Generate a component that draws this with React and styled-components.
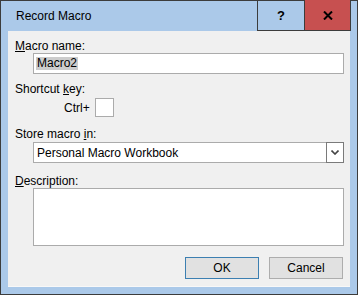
import React from "react";
import styled, { createGlobalStyle } from "styled-components";

const GlobalStyle = createGlobalStyle`
  html, body { margin: 0; padding: 0; background: #ffffff; }
  body { font-family: "Liberation Sans", Arial, sans-serif; font-size: 12px; color: #000; }
  * { box-sizing: border-box; }
`;

const Window = styled.div`
  width: 358px;
  height: 295px;
  border: 1px solid #3c3c3c;
  background: #abc9e9;
  display: flex;
  flex-direction: column;
`;

const TitleBar = styled.div`
  height: 30px;
  display: flex;
  align-items: stretch;
  padding-right: 6px;
`;

const Title = styled.div`
  flex: 1;
  padding-left: 15px;
  line-height: 30px;
  font-size: 12px;
  color: #000;
`;

const CaptionButton = styled.div`
  width: ${(p) => p.$w}px;
  margin-top: -1px;
  height: 31px;
  display: flex;
  align-items: center;
  justify-content: center;
  background: ${(p) => (p.$close ? "#c75050" : "transparent")};
  border-left: 1px solid #3c3c3c;
  border-bottom: 1px solid #3c3c3c;
  border-right: ${(p) => (p.$close ? "1px solid #3c3c3c" : "none")};
  font-weight: bold;
  font-size: 13px;
  color: #000;
`;

const Client = styled.div`
  flex: 1;
  margin: 0 7px 7px 7px;
  background: #f0f0f0;
  border-bottom: 1px solid #f8f8f8;
  padding: 8px 6px 0 7px;
  display: flex;
  flex-direction: column;
`;

const Label = styled.div`
  line-height: 14px;
  height: 14px;
  margin-top: ${(p) => p.$mt || 0}px;
  white-space: nowrap;
`;

const Field = styled.div`
  margin-left: 18px;
  margin-top: ${(p) => p.$mt || 0}px;
  height: ${(p) => p.$h || 21}px;
  background: #fff;
  border: 1px solid #ababab;
  display: flex;
  align-items: center;
  padding-left: 2px;
`;

const Selected = styled.span`
  background: #cccccc;
  line-height: 13px;
  padding: 0 1px;
`;

const ShortcutRow = styled.div`
  display: flex;
  align-items: center;
  margin-left: 49px;
  margin-top: 2px;
  gap: 5px;
`;

const KeyBox = styled.div`
  width: 19px;
  height: 19px;
  background: #fff;
  border: 1px solid #ababab;
`;

const SelectText = styled.span`
  flex: 1;
  padding-left: 1px;
`;

const DropButton = styled.div`
  width: 18px;
  height: 21px;
  margin: -1px -1px -1px 0;
  border: 1px solid #7a7a7a;
  background: #fff;
  display: flex;
  align-items: center;
  justify-content: center;
`;

const ButtonRow = styled.div`
  display: flex;
  justify-content: flex-end;
  gap: 10px;
  margin-top: 11px;
  margin-right: 1px;
`;

const Button = styled.div`
  width: 74px;
  height: 22px;
  background: #e1e1e1;
  border: 1px solid ${(p) => (p.$default ? "#3c7fb1" : "#adadad")};
  display: flex;
  align-items: center;
  justify-content: center;
`;

export default function App() {
  return (
    <>
      <GlobalStyle />
      <Window>
        <TitleBar>
          <Title>Record Macro</Title>
          <CaptionButton $w={47}>?</CaptionButton>
          <CaptionButton $w={47} $close>
            <svg width="10" height="9" viewBox="0 0 10 9">
              <path d="M1 0.5 L9 8.5 M9 0.5 L1 8.5" stroke="#000" strokeWidth="2" />
            </svg>
          </CaptionButton>
        </TitleBar>
        <Client>
          <Label>
            <u>M</u>acro name:
          </Label>
          <Field>
            <Selected>Macro2</Selected>
          </Field>
          <Label $mt={8}>
            Shortcut <u>k</u>ey:
          </Label>
          <ShortcutRow>
            <span>Ctrl+</span>
            <KeyBox />
          </ShortcutRow>
          <Label $mt={10}>
            Store macro <u>i</u>n:
          </Label>
          <Field $mt={1}>
            <SelectText>Personal Macro Workbook</SelectText>
            <DropButton>
              <svg width="8" height="5" viewBox="0 0 8 5">
                <path d="M0.5 0.5 L4 4 L7.5 0.5" stroke="#444" strokeWidth="1.6" fill="none" />
              </svg>
            </DropButton>
          </Field>
          <Label $mt={11}>
            <u>D</u>escription:
          </Label>
          <Field $h={58} />
          <ButtonRow>
            <Button $default>OK</Button>
            <Button>Cancel</Button>
          </ButtonRow>
        </Client>
      </Window>
    </>
  );
}
